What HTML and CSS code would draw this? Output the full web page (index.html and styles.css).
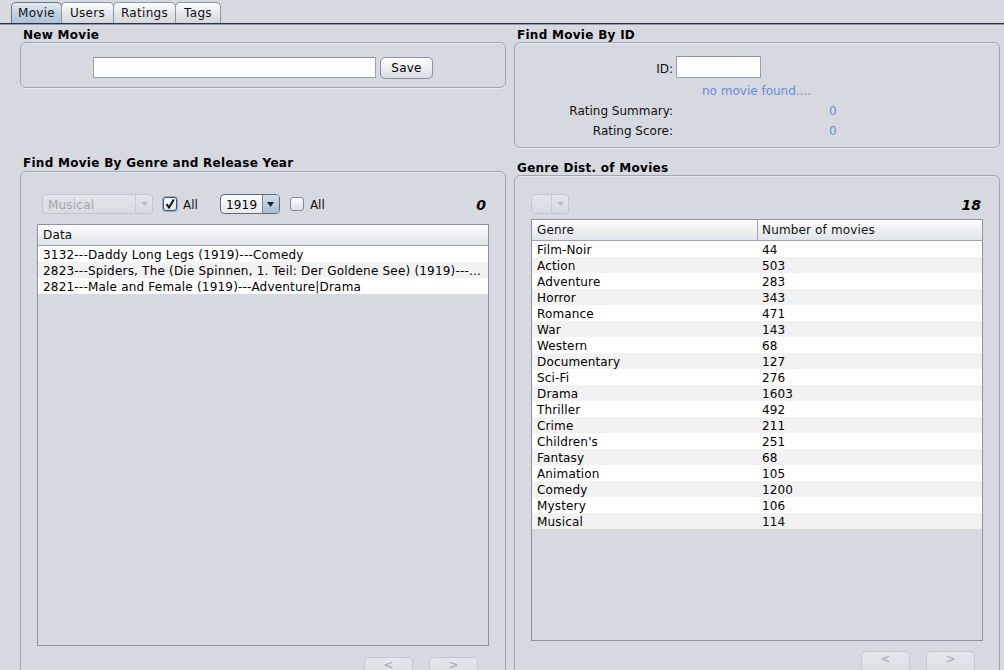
FILE: index.html
```html
<!DOCTYPE html>
<html>
<head>
<meta charset="utf-8">
<link rel="stylesheet" href="styles.css">
</head>
<body>
<div class="tabs">
  <div class="tab active w-movie">Movie</div>
  <div class="tab w-users">Users</div>
  <div class="tab w-ratings">Ratings</div>
  <div class="tab w-tags">Tags</div>
</div>
<div class="tabline"></div>
<div class="content">
  <div class="col">
    <div class="title">New Movie</div>
    <div class="panel newp">
      <div class="field newf"></div>
      <div class="btn save">Save</div>
    </div>
    <div class="title t-genre">Find Movie By Genre and Release Year</div>
    <div class="panel big big1">
      <div class="filter indent">
        <div class="combo dis musical"><span class="ctext">Musical</span><span class="carrow"><svg width="7" height="4" viewBox="0 0 7 4"><path d="M0 0H7L3.5 4Z" fill="#b3b7be"/></svg></span></div>
        <div class="chk checked"><svg width="12" height="12" viewBox="0 0 12 12"><path d="M2.5 6.2 L5 9.5 L9.8 1.5" fill="none" stroke="#111" stroke-width="2"/></svg></div>
        <span class="chklbl">All</span>
        <div class="combo act year"><span class="ctext">1919</span><span class="carrow"><svg width="7" height="5" viewBox="0 0 7 5"><path d="M0 0H7L3.5 5Z" fill="#1b1f26"/></svg></span></div>
        <div class="chk"></div>
        <span class="chklbl">All</span>
        <span class="count">0</span>
      </div>
      <div class="tbl tleft">
        <div class="thead"><div class="th">Data</div></div>
        <div class="tr">3132---Daddy Long Legs (1919)---Comedy</div>
        <div class="tr">2823---Spiders, The (Die Spinnen, 1. Teil: Der Goldene See) (1919)---...</div>
        <div class="tr">2821---Male and Female (1919)---Adventure|Drama</div>
      </div>
      <div class="nav navl">
        <div class="btn navb">&lt;</div>
        <div class="btn navb">&gt;</div>
      </div>
    </div>
  </div>
  <div class="col">
    <div class="title">Find Movie By ID</div>
    <div class="panel idp">
      <div class="idgrid">
        <span class="lbl">ID:</span><div class="cell"><div class="field idf"></div></div>
        <span></span><span class="nf">no movie found....</span>
        <span class="lbl">Rating Summary:</span><span class="val">0</span>
        <span class="lbl">Rating Score:</span><span class="val">0</span>
      </div>
    </div>
    <div class="title t-dist">Genre Dist. of Movies</div>
    <div class="panel big big2">
      <div class="filter">
        <div class="combo dis empty"><span class="ctext"></span><span class="carrow"><svg width="7" height="4" viewBox="0 0 7 4"><path d="M0 0H7L3.5 4Z" fill="#b3b7be"/></svg></span></div>
        <span class="count">18</span>
      </div>
      <div class="tbl tright">
        <div class="thead two"><div class="th">Genre</div><div class="th div">Number of movies</div></div>
        <div class="tr two"><span>Film-Noir</span><span>44</span></div>
        <div class="tr two"><span>Action</span><span>503</span></div>
        <div class="tr two"><span>Adventure</span><span>283</span></div>
        <div class="tr two"><span>Horror</span><span>343</span></div>
        <div class="tr two"><span>Romance</span><span>471</span></div>
        <div class="tr two"><span>War</span><span>143</span></div>
        <div class="tr two"><span>Western</span><span>68</span></div>
        <div class="tr two"><span>Documentary</span><span>127</span></div>
        <div class="tr two"><span>Sci-Fi</span><span>276</span></div>
        <div class="tr two"><span>Drama</span><span>1603</span></div>
        <div class="tr two"><span>Thriller</span><span>492</span></div>
        <div class="tr two"><span>Crime</span><span>211</span></div>
        <div class="tr two"><span>Children's</span><span>251</span></div>
        <div class="tr two"><span>Fantasy</span><span>68</span></div>
        <div class="tr two"><span>Animation</span><span>105</span></div>
        <div class="tr two"><span>Comedy</span><span>1200</span></div>
        <div class="tr two"><span>Mystery</span><span>106</span></div>
        <div class="tr two"><span>Musical</span><span>114</span></div>
      </div>
      <div class="nav navr">
        <div class="btn navb">&lt;</div>
        <div class="btn navb">&gt;</div>
      </div>
    </div>
  </div>
</div>
</body>
</html>
```
FILE: styles.css
```css
* { box-sizing: border-box; }
html, body { margin: 0; height: 670px; overflow: hidden; }
body {
  background: #d6d9df;
  font-family: "DejaVu Sans", sans-serif;
  font-size: 12px;
  color: #000;
}

/* tabs */
.tabs { display: flex; padding: 2px 0 0 11px; height: 23px; }
.tab {
  height: 21px;
  line-height: 21px;
  text-align: center;
  border: 1px solid #8f96a1;
  border-bottom: none;
  border-radius: 5px 5px 0 0;
  background: linear-gradient(#fdfdfe, #e3e6ea 55%, #d3d7dd);
  margin-right: -1px;
  color: #111;
  letter-spacing: 0.3px;
}
.w-movie { width: 51px; }
.w-users { width: 53px; }
.w-ratings { width: 63px; }
.w-tags { width: 46px; }
.tab.active {
  background: linear-gradient(#e3eaf2, #c3d2e2 50%, #aec2d7);
  border-color: #66768c;
}
.tabline {
  height: 2px;
  border-top: 1px solid #25344b;
  background: #8d9bb0;
}

/* layout */
.content {
  display: grid;
  grid-template-columns: 486px 486px;
  column-gap: 8px;
  padding: 2px 0 0 20px;
}
.col { display: flex; flex-direction: column; }
.title {
  font-weight: bold;
  line-height: 17px;
  height: 15px;
  padding-left: 3px;
  letter-spacing: 0.28px;
}
.t-genre { margin-top: 67px; }
.t-dist { margin-top: 12px; }

.panel {
  border: 1px solid #a1a5ad;
  border-radius: 6px;
  box-shadow: inset 0 1px 0 #e6e8ec, 0 1px 0 #e9ebee;
}
.newp {
  height: 46px;
  display: flex;
  justify-content: center;
  align-items: flex-start;
  padding-top: 14px;
  gap: 4px;
}
.field {
  background: #fff;
  border: 1px solid #9aa0a9;
  border-top-color: #8a9099;
}
.newf { width: 283px; height: 21px; }
.btn {
  border: 1px solid #8b919a;
  border-radius: 5px;
  background: linear-gradient(#fdfdfe, #eceef1 50%, #d8dbe0);
  text-align: center;
}
.save { width: 53px; height: 22px; line-height: 21px; letter-spacing: 0.2px; }

.idp { height: 106px; padding-top: 13px; }
.idgrid {
  display: grid;
  grid-template-columns: 158px 1fr;
  grid-template-rows: 25px 20px 20px 20px;
  column-gap: 3px;
  align-items: center;
}
.lbl { text-align: right; color: #111; }
.cell { align-self: start; }
.idf { width: 85px; height: 22px; }
.nf { color: #6a8ecf; padding-left: 26px; }
.val { color: #6a8ecf; padding-left: 153px; }

.big { height: 520px; padding: 0 16px; }
.big1 { margin-top: 1px; }
.filter {
  display: flex;
  align-items: flex-start;
  height: 20px;
  margin-top: 22px;
}
.big2 .filter { margin-top: 18px; }
.indent { padding-left: 5px; }

.combo {
  display: flex;
  height: 20px;
  border-radius: 4px;
  overflow: hidden;
}
.ctext { flex: 1; padding-left: 5px; line-height: 20px; letter-spacing: 0.2px; }
.carrow {
  width: 17px;
  display: flex;
  align-items: center;
  justify-content: center;
}
.combo.dis {
  border: 1px solid #c3c7cd;
  background: linear-gradient(#e1e4e8, #d8dbe0);
  color: #a2a6ad;
}
.combo.dis .carrow { border-left: 1px solid #c8cbd1; }
.musical { width: 111px; }
.empty { width: 38px; }
.combo.act {
  border: 1px solid #5d6a7c;
  background: linear-gradient(#fbfcfd, #e6e9ed);
}
.combo.act .carrow {
  border-left: 1px solid #7d8a9c;
  background: linear-gradient(#d4deea, #a9bcd2);
}
.year { width: 60px; margin-left: 22px; }

.chk {
  width: 14px;
  height: 14px;
  margin-top: 3px;
  border: 1px solid #7d8898;
  border-radius: 3px;
  background: linear-gradient(#fdfdfe, #dde1e6);
  margin-left: 10px;
  display: flex;
  align-items: center;
  justify-content: center;
}
.chk.checked {
  border-color: #45546a;
  box-shadow: 0 0 0 1px #8eaad4;
}
.chklbl { margin-left: 6px; color: #111; line-height: 22px; }
.count {
  margin-left: auto;
  padding-right: 3px;
  font-weight: bold;
  font-style: italic;
  font-size: 14px;
  line-height: 22px;
}
.big2 .count { padding-right: 2px; }

.tbl {
  border: 1px solid #8e939b;
  height: 422px;
  margin-top: 10px;
  overflow: hidden;
}
.tright { margin-top: 5px; }
.thead {
  height: 21px;
  border-bottom: 1px solid #9fa4ac;
  background: linear-gradient(#fdfdfe, #eef0f2 50%, #e0e3e8);
  display: flex;
}
.th { padding-left: 5px; line-height: 20px; color: #111; letter-spacing: 0.15px; }
.thead.two .th:first-child { width: 225px; }
.thead.two .th.div { flex: 1; border-left: 1px solid #a3a8b0; padding-left: 4px; }
.tr {
  height: 16px;
  padding: 2px 0 0 5px;
  line-height: 14px;
  background: #fff;
  white-space: nowrap;
  overflow: hidden;
  letter-spacing: 0.2px;
}
.tr:nth-child(odd) { background: #f2f2f2; }
.tr.two { display: flex; letter-spacing: 0.15px; }
.tr.two span:first-child { width: 225px; }

.nav { display: flex; justify-content: flex-end; gap: 16px; }
.navl { margin-top: 11px; margin-right: 11px; }
.navr { margin-top: 10px; margin-right: 8px; }
.navb {
  width: 49px;
  height: 24px;
  line-height: 15px;
  border-color: #c6cad0;
  background: linear-gradient(#e4e7eb, #d8dbe0);
  color: #a3a8b0;
}
```
